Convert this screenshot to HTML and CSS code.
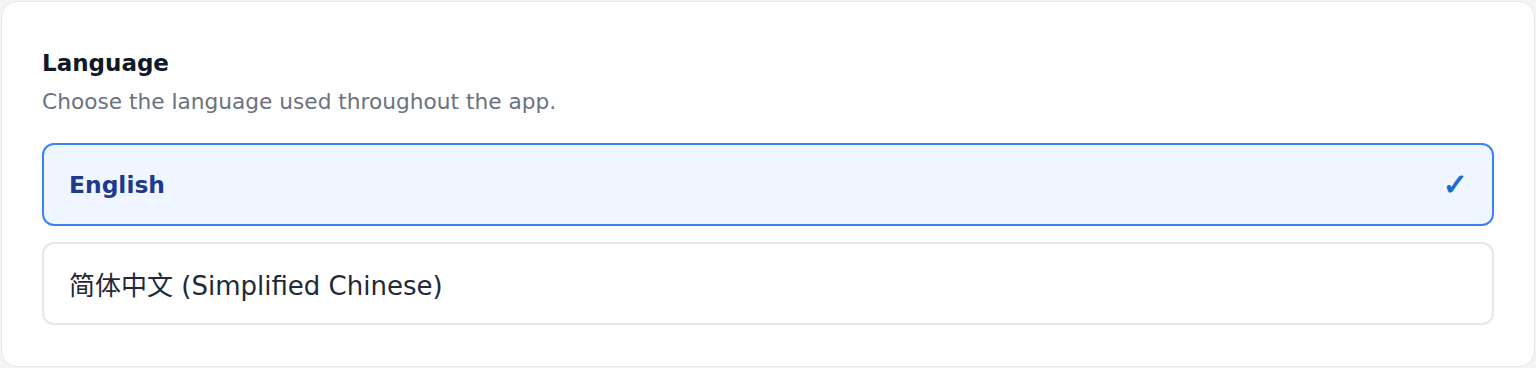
FILE: index.html
```html
<!DOCTYPE html>
<html lang="en">
<head>
  <meta charset="UTF-8" />
  <meta name="viewport" content="width=device-width, initial-scale=1.0" />
  <title>Settings - Language</title>
  <link rel="stylesheet" href="styles.css">
</head>
<body>
  <section class="card">
    <h2 class="card-title">Language</h2>
    <p class="card-desc">Choose the language used throughout the app.</p>

    <ul class="lang-list">
      <li class="lang-option selected">
        <span class="lang-name">English</span>
        <span class="check">✓</span>
      </li>
      <li class="lang-option">
        <span class="lang-name">简体中文 (Simplified Chinese)</span>
      </li>
    </ul>
  </section>
</body>
</html>
```

FILE: styles.css
```css
:root {
  --border: #e5e7eb;
  --primary: #3b82f6;
  --radius: 16px;
}

* {
  box-sizing: border-box;
}

body {
  margin: 0;
  padding: 1px;
  background: #f3f4f6;
  font-family: "DejaVu Sans", "Noto Sans CJK SC", sans-serif;
  color: #1f2937;
}

.card {
  height: 366px;
  background: #fff;
  border: 1px solid var(--border);
  border-radius: var(--radius);
  padding: 46px 40px 40px;
}

.card-title {
  margin: 0;
  font-size: 23px;
  font-weight: 700;
  line-height: 30px;
  color: #111827;
}

.card-desc {
  margin: 10px 0 27px;
  font-size: 21.7px;
  line-height: 28px;
  color: #6b7280;
}

.lang-list {
  list-style: none;
  margin: 0;
  padding: 0;
  display: flex;
  flex-direction: column;
  gap: 16px;
}

.lang-option {
  display: flex;
  align-items: center;
  justify-content: space-between;
  height: 83px;
  padding: 0 24px 0 25px;
  border: 2px solid var(--border);
  border-radius: 12px;
  font-size: 26px;
}

.lang-option.selected {
  background: #eff6ff;
  border-color: var(--primary);
}

.selected .lang-name {
  font-size: 23.4px;
  font-weight: 700;
  color: #1e3a8a;
}

.check {
  color: #1a6cc9;
  font-size: 30px;
  line-height: 1;
  -webkit-text-stroke: 1px #1a6cc9;
}
```
